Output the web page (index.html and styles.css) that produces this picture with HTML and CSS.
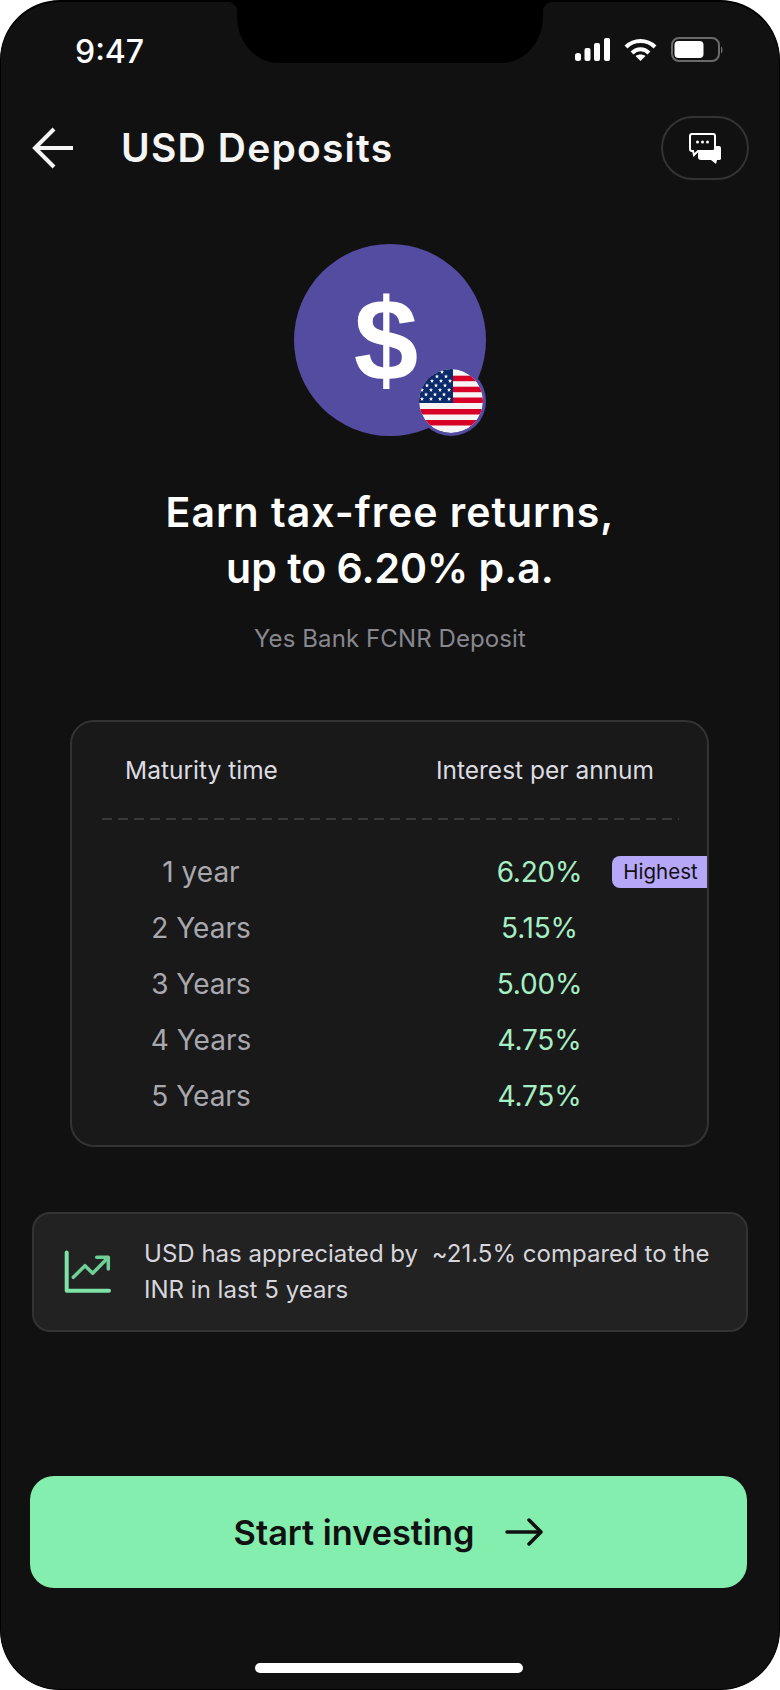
FILE: index.html
```html
<!DOCTYPE html>
<html lang="en">
<head>
<meta charset="utf-8">
<title>USD Deposits</title>
<link rel="stylesheet" href="styles.css">
</head>
<body>
<main class="phone">
  <div class="notch"></div>
  <div class="status">
    <span class="time">9:47</span>
    <div class="status-icons">
      <svg class="signal" width="35" height="24" viewBox="0 0 35 24" fill="#fff"><rect x="0" y="15" width="6" height="8" rx="2.500"/><rect x="9.500" y="10" width="6" height="13" rx="2"/><rect x="19" y="5" width="6" height="18" rx="2"/><rect x="29" y="0" width="6" height="23" rx="2"/></svg>
      <svg class="wifi" width="33" height="24" viewBox="0 0 33 24" fill="none" stroke="#fff" stroke-width="4"><path d="M2 9C10 1 23 1 31 9"/><path d="M8 15C13 10 20 10 25 15"/><path d="M16.500 23l-5-5c3-2 7-2 10 0z" fill="#fff" stroke="none"/></svg>
      <svg class="battery" width="52" height="26" viewBox="0 0 52 26" fill="none"><rect x="1" y="1" width="47" height="23" rx="7" stroke="#6a6a6a" stroke-width="2"/><rect x="3.500" y="4" width="29" height="17" rx="4" fill="#fff"/><path d="M50 9.500c2 .5 2 6.500 0 7z" fill="#6a6a6a"/></svg>
    </div>
  </div>
  <header class="nav">
    <svg class="back" width="42" height="42" viewBox="0 0 42 42" fill="none" stroke="#f4f4f4" stroke-width="4"><path d="M22 2 3 21l19 19"/><path d="M3 21h38"/></svg>
    <h1 class="nav-title">USD Deposits</h1>
    <button class="chat" type="button" aria-label="Chat">
      <svg width="32" height="32" viewBox="0 0 32 32"><path d="M3 2h21a2 2 0 0 1 2 2v13a2 2 0 0 1-2 2H9l-4 4-1-4H3a2 2 0 0 1-2-2V4a2 2 0 0 1 2-2z" fill="#111" stroke="#fff" stroke-width="2"/><circle cx="8.500" cy="10" r="1.500" fill="#fff"/><circle cx="13.500" cy="10" r="1.500" fill="#fff"/><circle cx="18.500" cy="10" r="1.500" fill="#fff"/><path d="M11 18h15l1-4h3a2 2 0 0 1 2 2v11a2 2 0 0 1-2 1h-2l-1 4-5-4H12a3 3 0 0 1-3-3v-4a3 3 0 0 1 2-3z" fill="#fff"/></svg>
    </button>
  </header>
  <section class="hero">
    <div class="coin">
      <span class="dollar">$</span>
      <svg class="flag" viewBox="0 0 64 64">
        <defs>
          <clipPath id="round"><circle cx="32" cy="32" r="32"/></clipPath>
          <polygon id="star" points="0,-2.200 .6,-.7 2.100,-.7 .9,.3 1.300,1.800 0,.9 -1.300,1.800 -.9,.3 -2.100,-.7 -.6,-.7" fill="#fff"/>
        </defs>
        <g clip-path="url(#round)">
          <rect width="64" height="64" fill="#f5f5f5"/>
          <g fill="#d80027">
            <rect y="6.700" width="64" height="5.500"/><rect y="17.700" width="64" height="5.500"/><rect y="28.500" width="64" height="5.500"/><rect y="40" width="64" height="5.500"/><rect y="51" width="64" height="5.500"/>
          </g>
          <rect width="34" height="34" fill="#0a2a6b"/>
          <use href="#star" x="23" y="3"/>
          <use href="#star" x="18" y="7.500"/><use href="#star" x="27" y="7.500"/>
          <use href="#star" x="13" y="12"/><use href="#star" x="22" y="12"/><use href="#star" x="31" y="12"/>
          <use href="#star" x="8" y="16.500"/><use href="#star" x="17" y="16.500"/><use href="#star" x="26" y="16.500"/>
          <use href="#star" x="3" y="21"/><use href="#star" x="12" y="21"/><use href="#star" x="21" y="21"/><use href="#star" x="30" y="21"/>
          <use href="#star" x="7" y="25.500"/><use href="#star" x="16" y="25.500"/><use href="#star" x="25" y="25.500"/>
          <use href="#star" x="3" y="30"/><use href="#star" x="12" y="30"/><use href="#star" x="21" y="30"/><use href="#star" x="30" y="30"/>
        </g>
      </svg>
    </div>
    <h2 class="headline">Earn tax-free returns,<br><span class="headline-rate">up to 6.20% p.a.</span></h2>
    <p class="sub">Yes Bank FCNR Deposit</p>
  </section>
  <section class="rates">
    <div class="rates-head">
      <span class="col-time">Maturity time</span>
      <span class="col-rate">Interest per annum</span>
    </div>
    <div class="rates-body">
      <div class="row"><span class="col-time">1 year</span><span class="col-rate pct">6.20%</span><span class="tag">Highest</span></div>
      <div class="row"><span class="col-time">2 Years</span><span class="col-rate pct">5.15%</span></div>
      <div class="row"><span class="col-time">3 Years</span><span class="col-rate pct">5.00%</span></div>
      <div class="row"><span class="col-time">4 Years</span><span class="col-rate pct">4.75%</span></div>
      <div class="row"><span class="col-time">5 Years</span><span class="col-rate pct">4.75%</span></div>
    </div>
  </section>
  <section class="info">
    <svg class="trend" width="48" height="44" viewBox="0 0 48 44" fill="none" stroke-linecap="round" stroke-linejoin="round"><path d="M2.700 2.500v38.200H45" stroke="#7fe3a6" stroke-width="4"/><path d="M9.300 27.300 21 15.700l7.700 7.600L42.700 9" stroke="#6fcf97" stroke-width="3.500"/><path d="M32.700 7.300h11.600V19" stroke="#6fcf97" stroke-width="3.500"/></svg>
    <p class="info-text">USD has appreciated by &nbsp;~21.5% compared to the INR in last 5 years</p>
  </section>
  <div class="spacer"></div>
  <button class="cta" type="button">
    <span>Start investing</span>
    <svg width="38" height="28" viewBox="0 0 38 28" fill="none" stroke="#111" stroke-width="3.500" stroke-linecap="round" stroke-linejoin="round"><path d="M2 14h33"/><path d="M24 2l12 12-12 12"/></svg>
  </button>
  <div class="home"></div>
</main>
</body>
</html>
```
FILE: styles.css
```css
* { box-sizing: border-box; margin: 0; padding: 0; }
html, body { width: 780px; height: 1690px; background: #fff; overflow: hidden; }
body { font-family: "Inter", "Liberation Sans", sans-serif; }

.phone {
  position: relative;
  width: 780px;
  height: 1690px;
  background: #111;
  border: 1px solid #000;
  border-top-width: 2px;
  border-radius: 60px;
  overflow: hidden;
  display: flex;
  flex-direction: column;
  color: #fff;
}
.notch {
  position: absolute;
  top: -1px;
  left: 236px;
  width: 306px;
  height: 62px;
  background: #000;
  border-radius: 0 0 42px 42px / 0 0 46px 46px;
}
.notch::before,
.notch::after {
  content: "";
  position: absolute;
  top: 0;
  width: 14px;
  height: 9px;
}
.notch::before {
  left: -14px;
  background: radial-gradient(14px 9px at 0 100%, transparent 96%, #000 100%);
}
.notch::after {
  right: -14px;
  background: radial-gradient(14px 9px at 100% 100%, transparent 96%, #000 100%);
}
.status {
  flex: none;
  height: 114px;
  padding: 30px 56px 0 74px;
  display: flex;
  justify-content: space-between;
  align-items: flex-start;
}
.time { font-size: 32px; line-height: 40px; font-weight: 500; color: #fff; }
.status-icons { display: flex; align-items: center; gap: 14px; padding-top: 5px; }
.nav {
  flex: none;
  height: 64px;
  padding: 0 30px 0 31px;
  display: flex;
  align-items: center;
}
.back { flex: none; }
.nav-title {
  margin-left: 47px;
  flex: 1;
  font-size: 39px;
  letter-spacing: 1.2px;
  font-weight: 600;
  line-height: 46px;
  color: #f5f5f5;
}
.chat {
  width: 88px;
  height: 64px;
  border: 2px solid #333;
  border-radius: 32px;
  background: transparent;
  display: flex;
  align-items: center;
  justify-content: center;
}
.hero {
  flex: none;
  display: flex;
  flex-direction: column;
  align-items: center;
  padding-top: 64px;
}
.coin {
  position: relative;
  width: 192px;
  height: 192px;
  border-radius: 50%;
  background: #544ca0;
  display: flex;
  align-items: center;
  justify-content: center;
}
.dollar {
  font-family: "Liberation Sans", sans-serif;
  font-size: 116px;
  line-height: 1;
  font-weight: 700;
  margin-right: 8px;
  color: #fff;
}
.flag {
  position: absolute;
  right: 0;
  bottom: 0;
  width: 70px;
  height: 70px;
  padding: 3px;
  background: #544ca0;
  border-radius: 50%;
}
.headline {
  margin-top: 48px;
  font-size: 41px;
  letter-spacing: 1px;
  line-height: 56px;
  font-weight: 600;
  text-align: center;
  color: #fff;
}
.headline-rate { letter-spacing: 0; }
.sub {
  margin-top: 27px;
  font-size: 24px;
  letter-spacing: .1px;
  line-height: 32px;
  color: #87878f;
}
.rates {
  flex: none;
  margin: 65px 0 0 69px;
  width: 639px;
  height: 427px;
  background: #191919;
  border: 2px solid #333;
  border-radius: 24px;
  overflow: hidden;
}
.rates-head {
  margin: 0 28px 0 30px;
  height: 98px;
  padding-bottom: 3px;
  display: flex;
  align-items: center;
  background: repeating-linear-gradient(90deg, #3a3a3a 0 10px, transparent 10px 16px) bottom / 100% 2px no-repeat;
  font-size: 24.500px;
  color: #dcdce2;
}
.rates-head .col-time { width: 199px; }
.rates-head .col-rate { padding-left: 110px; }
.rates-body { padding-top: 24px; }
.row {
  position: relative;
  height: 56px;
  margin: 0 30px;
  display: flex;
  align-items: center;
  font-size: 28px;
  color: #a8a8ae;
}
.col-time { width: 198px; text-align: center; flex: none; }
.col-rate { flex: 1; text-align: center; padding-left: 112px; white-space: nowrap; }
.pct { color: #a6efc4; padding-left: 102px; letter-spacing: -.2px; }
.tag {
  position: absolute;
  right: -30px;
  top: 12px;
  width: 95px;
  height: 32px;
  padding-left: 2px;
  background: #b7a7f8;
  color: #111;
  font-size: 20.500px;
  line-height: 32px;
  text-align: center;
  border-radius: 8px 0 0 8px;
}
.info {
  flex: none;
  margin: 65px 0 0 31px;
  width: 716px;
  height: 120px;
  background: #222;
  border: 2px solid #333;
  border-radius: 18px;
  display: flex;
  align-items: center;
  padding: 0 30px;
  gap: 32px;
}
.trend { flex: none; }
.info-text {
  font-size: 24px;
  letter-spacing: .02px;
  line-height: 36px;
  color: #d6d6dc;
}
.spacer { flex: 1; }
.cta {
  flex: none;
  margin-left: 29px;
  width: 717px;
  height: 112px;
  border: 0;
  border-radius: 24px;
  background: #83eeae;
  color: #111;
  font-family: "Inter", sans-serif;
  font-size: 34.300px;
  font-weight: 600;
  display: flex;
  align-items: center;
  justify-content: center;
  gap: 31px;
}
.home {
  flex: none;
  align-self: center;
  margin: 75px 3px 16px 0;
  width: 268px;
  height: 10px;
  border-radius: 5px;
  background: #fff;
}
```
